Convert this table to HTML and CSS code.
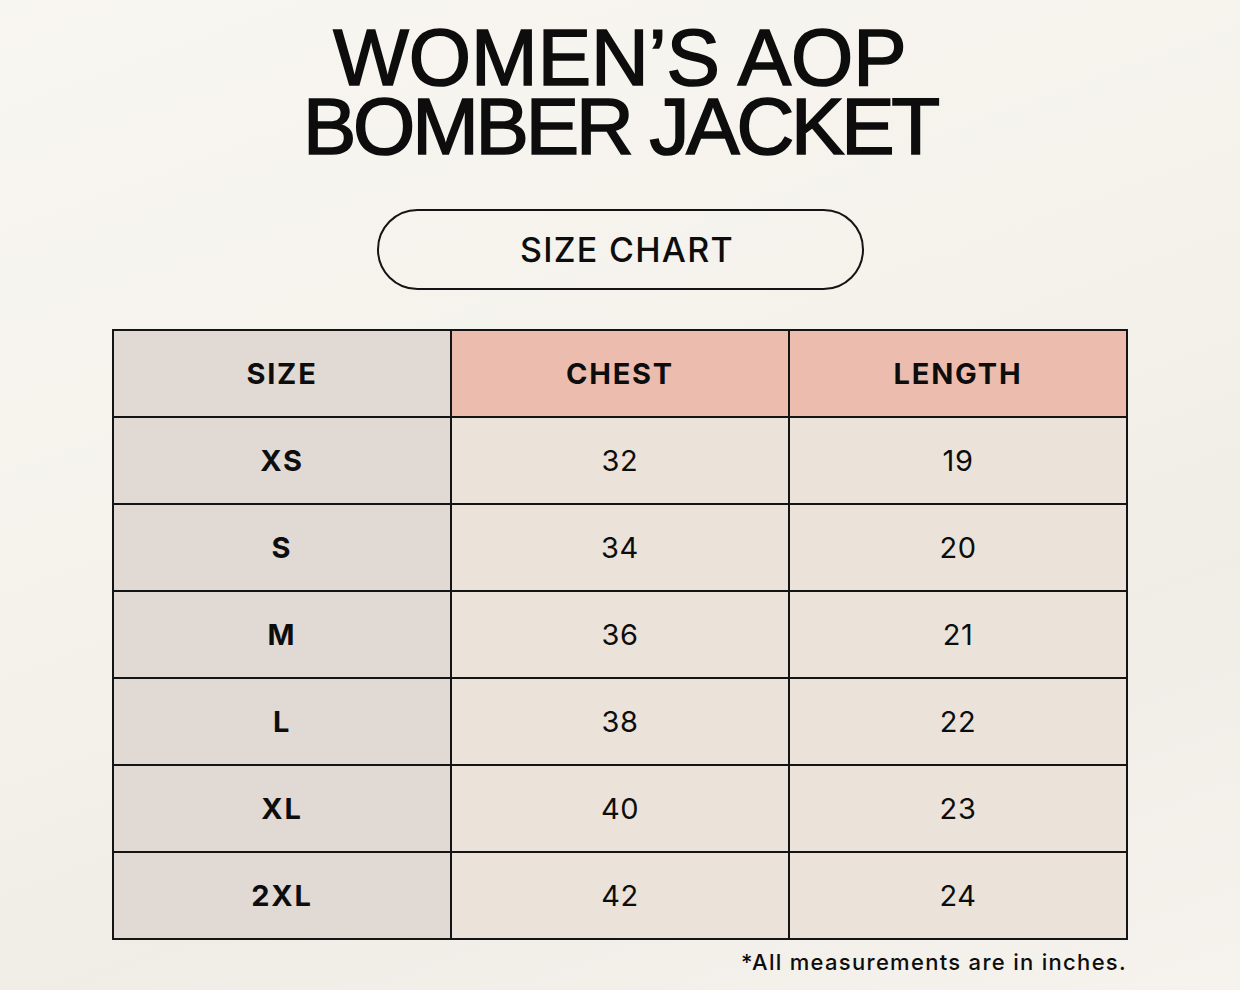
FILE: index.html
```html
<!DOCTYPE html>
<html lang="en">
<head>
<meta charset="utf-8">
<title>Women's AOP Bomber Jacket Size Chart</title>
<link rel="stylesheet" href="styles.css">
</head>
<body>
<main class="page">
  <h1 class="title"><span class="line line-1">WOMEN’S AOP</span><span class="line line-2">BOMBER JACKET</span></h1>
  <div class="pill">SIZE CHART</div>
  <table class="chart">
    <thead>
      <tr>
        <th class="size">SIZE</th>
        <th class="pink">CHEST</th>
        <th class="pink">LENGTH</th>
      </tr>
    </thead>
    <tbody>
      <tr><th class="size">XS</th><td>32</td><td>19</td></tr>
      <tr><th class="size">S</th><td>34</td><td>20</td></tr>
      <tr><th class="size">M</th><td>36</td><td>21</td></tr>
      <tr><th class="size">L</th><td>38</td><td>22</td></tr>
      <tr><th class="size">XL</th><td>40</td><td>23</td></tr>
      <tr><th class="size">2XL</th><td>42</td><td>24</td></tr>
    </tbody>
  </table>
  <p class="note">*All measurements are in inches.</p>
</main>
</body>
</html>
```

FILE: styles.css
```css
html, body {
  margin: 0;
  padding: 0;
}
body {
  width: 1240px;
  height: 990px;
  overflow: hidden;
  background: linear-gradient(160deg, #f8f6f1 0%, #f5f2ec 45%, #f0ece6 70%, #f6f3ee 100%);
  color: #0d0d0d;
  font-family: "Inter", "Liberation Sans", sans-serif;
}
.page {
  display: flex;
  flex-direction: column;
  align-items: center;
  padding-top: 23px;
}
.title {
  margin: 0;
  font-family: "Liberation Sans", Arial, sans-serif;
  font-weight: 400;
  -webkit-text-stroke: 1.7px #0d0d0d;
  font-size: 80px;
  text-align: center;
}
.line {
  display: block;
  height: 69px;
  line-height: 69px;
}
.line-1 {
  letter-spacing: 0;
}
.line-2 {
  letter-spacing: -3.2px;
}
.pill {
  margin-top: 48px;
  box-sizing: border-box;
  width: 487px;
  height: 81px;
  padding-left: 14px;
  border: 2px solid #141414;
  border-radius: 41px;
  display: flex;
  align-items: center;
  justify-content: center;
  font-size: 34px;
  font-weight: 500;
  letter-spacing: 1.3px;
}
.chart {
  margin-top: 39px;
  border-collapse: collapse;
  border: 2px solid #141414;
}
.chart th, .chart td {
  border: 2px solid #141414;
  width: 336px;
  height: 85px;
  padding: 0;
  text-align: center;
  vertical-align: middle;
}
.chart th {
  font-size: 29px;
  font-weight: 700;
  letter-spacing: 1.8px;
}
.chart th.size {
  background: #e0d9d4;
}
.chart th.pink {
  background: #ecbdaf;
}
.chart td {
  background: #ebe3d9;
  font-size: 29px;
  font-weight: 400;
  letter-spacing: 0.6px;
}
.note {
  align-self: flex-end;
  margin: 9px 113px 0 0;
  font-size: 22px;
  font-weight: 500;
  letter-spacing: 1.3px;
}
```
